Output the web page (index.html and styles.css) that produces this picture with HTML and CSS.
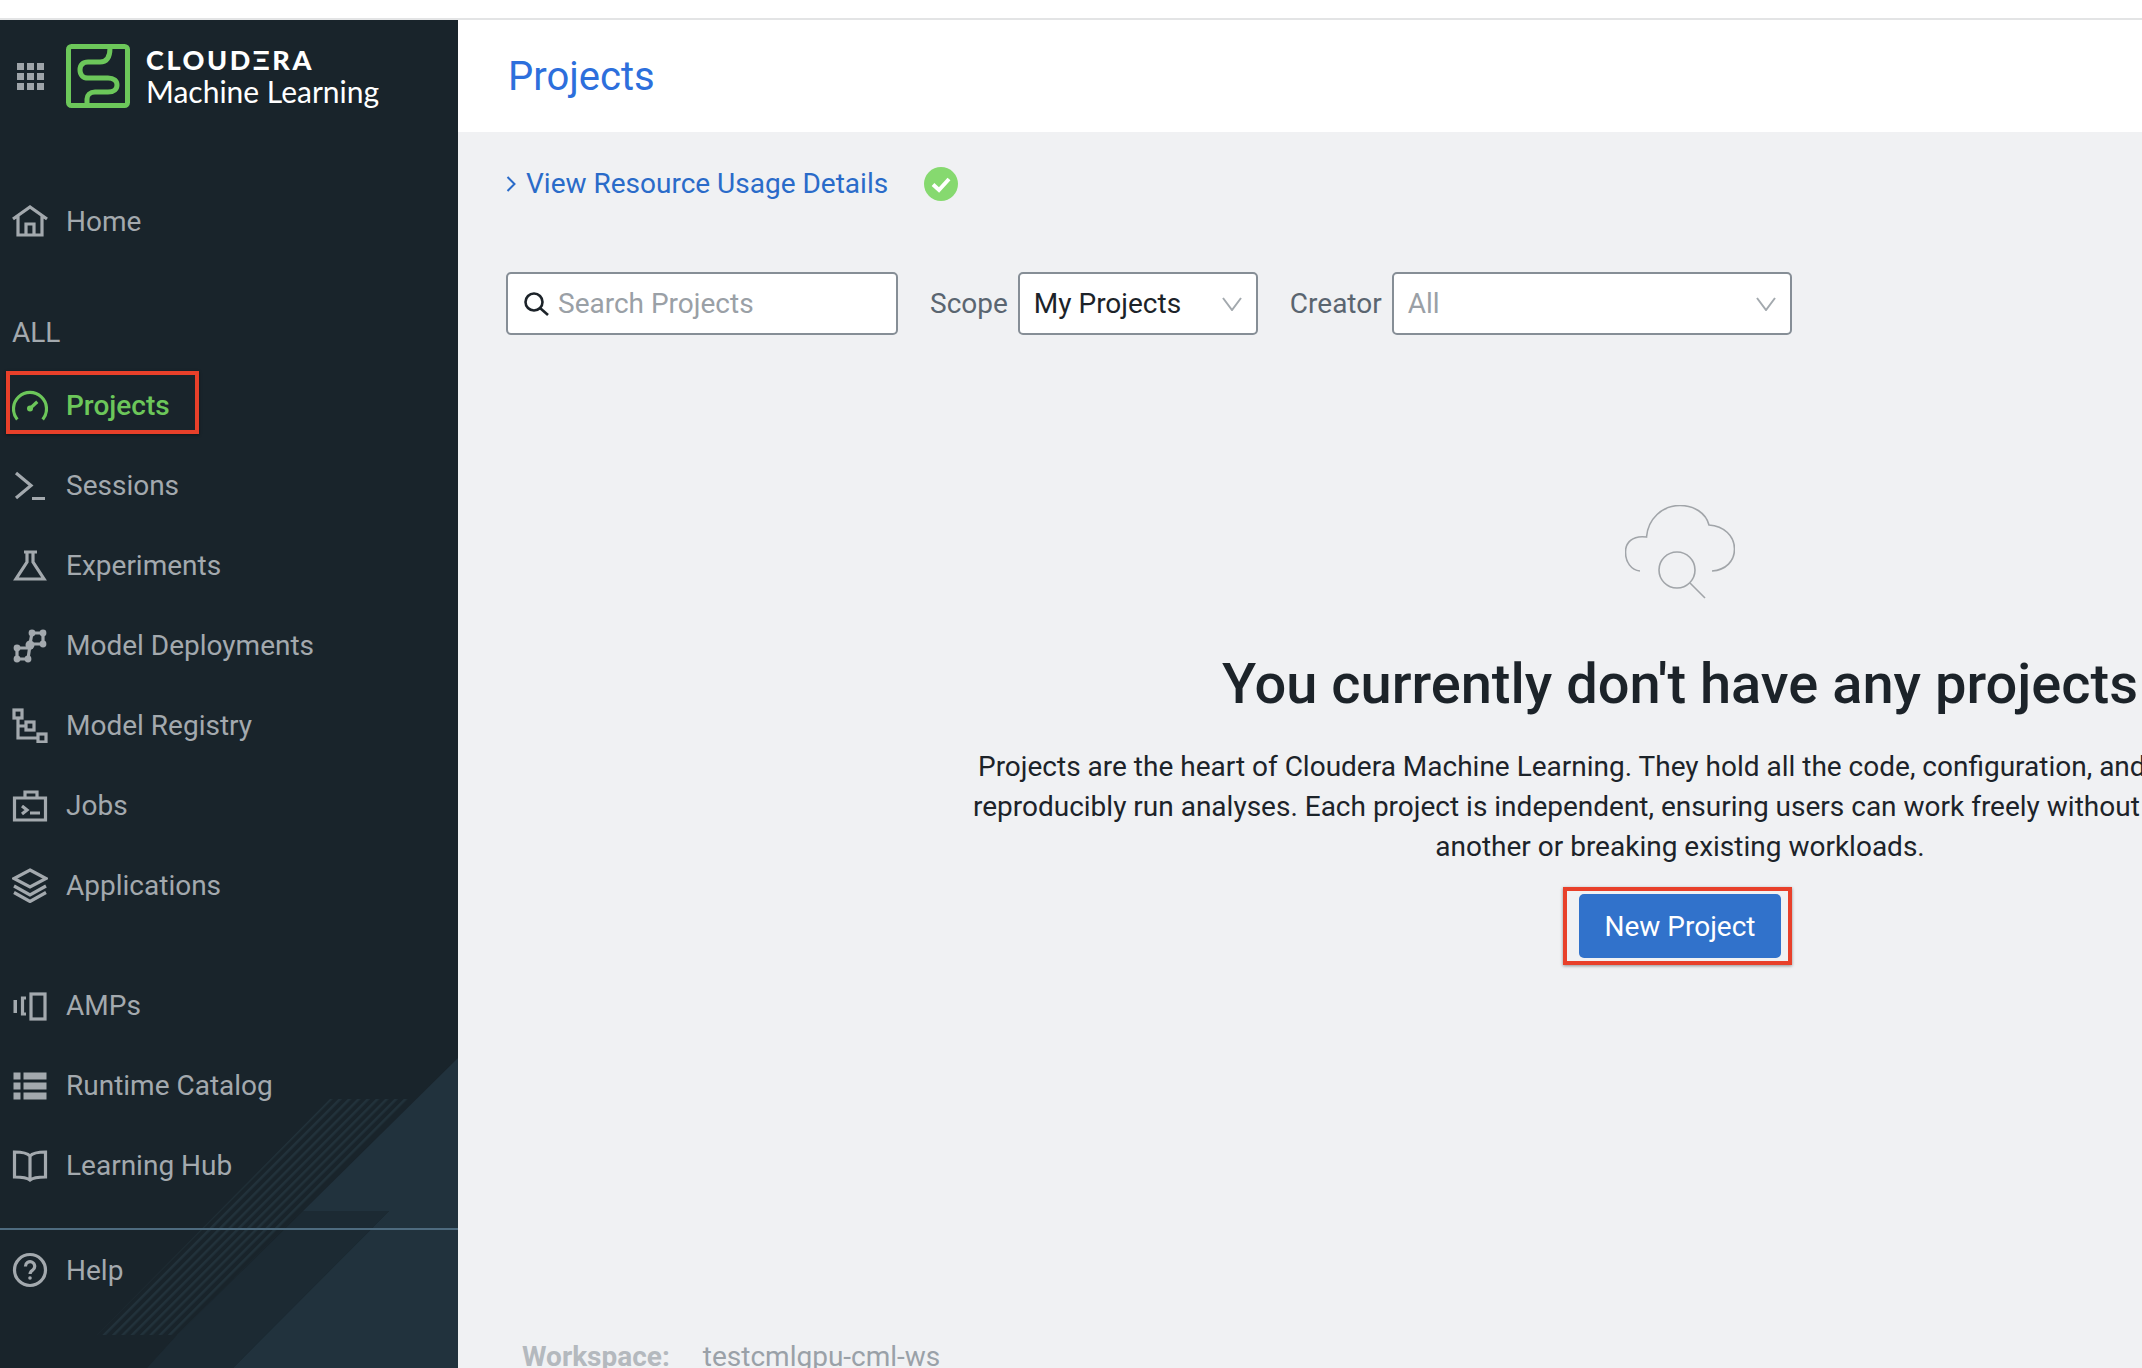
FILE: index.html
```html
<!DOCTYPE html>
<html lang="en">
<head>
    <meta charset="UTF-8">
    <meta name="viewport" content="width=device-width, initial-scale=1.0">
    <title>Projects - Cloudera Machine Learning</title>
    <link rel="stylesheet" href="styles.css">
</head>
<body>
    <div class="topline"></div>
    <div class="app">
        <aside class="sidebar">
            <svg class="sidebarArt" viewBox="0 20 458 1348" width="458" height="1348">
                <defs>
                    <pattern id="stripes" patternUnits="userSpaceOnUse" width="6.6" height="10" patternTransform="rotate(45)">
                        <rect width="2.4" height="10" fill="#22323b"></rect>
                    </pattern>
                </defs>
                <polygon points="458,1058 303,1211 389,1211 233,1368 458,1368" fill="#21323d"></polygon>
                <polygon points="389,1211 303,1211 177,1335 147,1368 233,1368" fill="#1c2a33"></polygon>
                <polygon points="330,1099 412,1099 177,1335 97,1335" fill="url(#stripes)"></polygon>
            </svg>

            <div class="brand">
                <svg class="gridIcon" viewBox="0 0 27 27" width="27" height="27">
                    <g fill="#9ea4a9">
                        <rect x="0" y="0" width="7" height="7"></rect><rect x="10" y="0" width="7" height="7"></rect><rect x="20" y="0" width="7" height="7"></rect>
                        <rect x="0" y="10" width="7" height="7"></rect><rect x="10" y="10" width="7" height="7"></rect><rect x="20" y="10" width="7" height="7"></rect>
                        <rect x="0" y="20" width="7" height="7"></rect><rect x="10" y="20" width="7" height="7"></rect><rect x="20" y="20" width="7" height="7"></rect>
                    </g>
                </svg>
                <svg class="logoIcon" viewBox="0 0 64 64" width="64" height="64">
                    <rect x="2.500" y="2.500" width="59" height="59" rx="3" fill="none" stroke="#6cc75a" stroke-width="5"></rect>
                    <path d="M44 4C44 12 42 18 34 18H22C17 18 14 21 14 26C14 31 17 34 22 34H42C48 34 51 37 51 41C51 45 48 48 42 48H29C24 48 21 51 21 55V62" fill="none" stroke="#6cc75a" stroke-width="5"></path>
                </svg>
                <div class="brandText">
                    <div class="brandName">CLOUDΞRA</div>
                    <div class="brandProduct">Machine Learning</div>
                </div>
            </div>

            <nav class="nav">
                <a class="navItem navHome">
                    <svg class="navIcon" viewBox="0 0 36 36"><path d="M1 16L18 4L35 16M6 13V32H30V13M14 32V21H22V32"></path></svg>
                    Home
                </a>
                <div class="navLabel">ALL</div>
                <a class="navItem navActive">
                    <svg class="navIcon" viewBox="0 0 36 36"><path d="M5.300 32.500A16.500 16.500 0 1 1 30.700 32.500"></path><path d="M18 21.500L25.300 14.800"></path><circle class="solid" cx="18" cy="21.500" r="3"></circle></svg>
                    Projects
                </a>
                <a class="navItem">
                    <svg class="navIcon" viewBox="0 0 36 36"><path d="M4 6L19 18.500L4 31M20 31.500H33"></path></svg>
                    Sessions
                </a>
                <a class="navItem">
                    <svg class="navIcon" viewBox="0 0 36 36"><path d="M12 5H25M15 5V15L4 32H32L21 15V5"></path></svg>
                    Experiments
                </a>
                <a class="navItem">
                    <svg class="navIcon" viewBox="0 0 36 36">
                        <path d="M20 6H31V17H18ZM5 21H18V18L16 32H5Z"></path>
                        <circle class="solid" cx="20" cy="6" r="3.400"></circle><circle class="solid" cx="31" cy="6" r="3.400"></circle><circle class="solid" cx="31" cy="17" r="3.400"></circle>
                        <circle class="solid" cx="18" cy="18" r="4.500"></circle>
                        <circle class="solid" cx="5" cy="21" r="3.400"></circle><circle class="solid" cx="5" cy="32" r="3.400"></circle><circle class="solid" cx="16" cy="32" r="3.400"></circle>
                    </svg>
                    Model Deployments
                </a>
                <a class="navItem">
                    <svg class="navIcon" viewBox="0 0 36 36">
                        <rect x="2" y="3" width="8" height="8"></rect><rect x="14" y="15" width="8" height="8"></rect><rect x="26" y="27" width="8" height="8"></rect>
                        <path d="M6 11V31H26M6 19H14"></path>
                    </svg>
                    Model Registry
                </a>
                <a class="navItem">
                    <svg class="navIcon" viewBox="0 0 36 36"><path d="M2.500 11H33.500V33H2.500ZM13 11V5H25V11M10 19L15 23L10 27M18 26H28"></path></svg>
                    Jobs
                </a>
                <a class="navItem">
                    <svg class="navIcon" viewBox="0 0 36 36"><path d="M18 3L34 11.500L18 20L2 11.500ZM2 19L18 28L34 19M2 25.500L18 34.500L34 25.500"></path></svg>
                    Applications
                </a>
                <a class="navItem navGroup">
                    <svg class="navIcon" viewBox="0 0 36 36">
                        <rect x="19" y="7" width="14" height="25"></rect>
                        <path d="M14 11H10.500V27H14"></path>
                        <rect class="solid" x="1.500" y="13" width="3.500" height="13"></rect>
                    </svg>
                    AMPs
                </a>
                <a class="navItem">
                    <svg class="navIcon" viewBox="0 0 36 36">
                        <g class="solid">
                            <rect x="1.500" y="5.500" width="7" height="7"></rect><rect x="11.500" y="5.500" width="23" height="7"></rect>
                            <rect x="1.500" y="15.500" width="7" height="7"></rect><rect x="11.500" y="15.500" width="23" height="7"></rect>
                            <rect x="1.500" y="25.500" width="7" height="7"></rect><rect x="11.500" y="25.500" width="23" height="7"></rect>
                        </g>
                    </svg>
                    Runtime Catalog
                </a>
                <a class="navItem">
                    <svg class="navIcon" viewBox="0 0 36 36"><path d="M18 9C15 5.500 9 5 2.500 5V30C9 30 15 30.500 18 33C21 30.500 27 30 33.500 30V5C27 5 21 5.500 18 9ZM18 9V33"></path></svg>
                    Learning Hub
                </a>
            </nav>

            <div class="helpArea">
                <a class="navItem navHelp">
                    <svg class="navIcon" viewBox="0 0 36 36"><circle cx="18" cy="18" r="15.500"></circle><path d="M13.500 14.500A4.600 4.600 0 1 1 20.800 18C19 19.300 18 20 18 22"></path><circle class="solid" cx="18" cy="26" r="1.800"></circle></svg>
                    Help
                </a>
            </div>
        </aside>

        <main class="main">
            <header class="pageHeader">
                <h1 class="pageTitle">Projects</h1>
            </header>

            <div class="resourceRow">
                <svg class="linkChevron" viewBox="0 0 10 20" width="10" height="20"><path d="M1.500 3L8.500 10L1.500 17"></path></svg>
                <a class="resourceLink">View Resource Usage Details</a>
                <svg class="statusIcon" viewBox="0 0 34 34" width="34" height="34">
                    <circle cx="17" cy="17" r="17" fill="#86d96f"></circle>
                    <path d="M9 17.500L15 23L25 12" fill="none" stroke="#fff" stroke-width="4"></path>
                </svg>
            </div>

            <div class="filters">
                <div class="field searchField">
                    <svg class="searchIcon" viewBox="0 0 26 24" width="26" height="24">
                        <circle cx="11" cy="10" r="8.500"></circle><path d="M17 16L25 23"></path>
                    </svg>
                    <span class="placeholder">Search Projects</span>
                </div>
                <span class="filterLabel">Scope</span>
                <div class="field selectField scopeField">
                    <span>My Projects</span>
                    <svg class="selectChevron" viewBox="0 0 20 14" width="20" height="14"><path d="M1 1L10 13L19 1"></path></svg>
                </div>
                <span class="filterLabel">Creator</span>
                <div class="field selectField creatorField">
                    <span class="placeholder">All</span>
                    <svg class="selectChevron" viewBox="0 0 20 14" width="20" height="14"><path d="M1 1L10 13L19 1"></path></svg>
                </div>
            </div>

            <section class="empty">
                <svg class="cloudIcon" viewBox="0 0 110 94" width="110" height="94">
                    <path d="M15 66C6 65 0.500 57 0.500 47C0.500 38 7 30 21.500 32C23 14 37 0.500 55 0.500C69 0.500 81 8 84 20C99 21 109.500 31 109.500 44C109.500 56 101 65 87 66"></path>
                    <circle cx="52" cy="65" r="18"></circle>
                    <path d="M65 78L80 93"></path>
                </svg>
                <h2 class="emptyTitle">You currently don't have any projects</h2>
                <p class="emptyText">Projects are the heart of Cloudera Machine Learning. They hold all the code, configuration, and libraries needed to<br>reproducibly run analyses. Each project is independent, ensuring users can work freely without interfering with one<br>another or breaking existing workloads.</p>
                <div class="callout">
                    <button class="primaryButton">New Project</button>
                </div>
            </section>

            <footer class="workspace">
                <span class="workspaceLabel">Workspace:</span>
                <span class="workspaceValue">testcmlgpu-cml-ws</span>
            </footer>
        </main>
    </div>
</body>
</html>
```

FILE: styles.css
```css
html, body {
    height: 100%;
}
body {
    margin: 0px;
    height: 1368px;
    overflow: hidden;
    background-color: #ffffff;
    font-family: Roboto, "Liberation Sans", sans-serif;
    font-size: 28px;
    color: #1c2329;
}
svg {
    display: block;
    flex: none;
}
.topline {
    height: 18px;
    border-bottom: 2px solid #e3e4e5;
}
.app {
    display: flex;
    height: 1348px;
}

/* sidebar */
.sidebar {
    position: relative;
    width: 458px;
    flex: none;
    background-color: #19242b;
    overflow: hidden;
}
.sidebarArt {
    position: absolute;
    top: 0;
    left: 0;
}
.brand {
    position: relative;
    display: flex;
    align-items: center;
    height: 112px;
    padding-left: 17px;
    box-sizing: border-box;
}
.gridIcon {
    margin-right: 22px;
}
.logoIcon {
    margin-right: 16px;
}
.brandName {
    font-family: Lato, sans-serif;
    font-weight: 900;
    font-size: 27px;
    line-height: 30px;
    letter-spacing: 2.6px;
    color: #ffffff;
}
.brandProduct {
    font-family: Lato, sans-serif;
    font-size: 30px;
    line-height: 33px;
    color: #ffffff;
}
.nav {
    position: relative;
    padding-top: 49px;
}
.navItem {
    position: relative;
    display: flex;
    align-items: center;
    gap: 18px;
    height: 80px;
    padding-left: 12px;
    color: #a3a9ae;
}
.navIcon {
    width: 36px;
    height: 36px;
    fill: none;
    stroke: currentColor;
    stroke-width: 3.2;
}
.navIcon .solid {
    fill: currentColor;
    stroke: none;
}
.navHome {
    margin-bottom: 52px;
}
.navLabel {
    height: 40px;
    line-height: 40px;
    padding-left: 12px;
    margin-bottom: 12px;
    color: #a3a9ae;
}
.navActive {
    color: #6cc75a;
    font-weight: 500;
}
/* red annotation from the original screenshot */
.navActive::after {
    content: "";
    position: absolute;
    top: 6px;
    left: 6px;
    width: 193px;
    height: 63px;
    box-sizing: border-box;
    border: 4px solid #e8402a;
    box-shadow: 0 1px 3px rgba(0, 0, 0, 0.4);
}
.navGroup {
    margin-top: 40px;
}
.helpArea {
    position: relative;
    margin-top: 23px;
    border-top: 2px solid #4e6b7f;
}

/* main area */
.main {
    flex: 1;
    min-width: 0;
    background-color: #f0f1f3;
    overflow: hidden;
}
.pageHeader {
    height: 112px;
    background-color: #ffffff;
    display: flex;
    align-items: center;
    padding-left: 50px;
}
.pageTitle {
    margin: 0;
    font-size: 40px;
    font-weight: 400;
    color: #2d6fdc;
}
.resourceRow {
    display: flex;
    align-items: center;
    height: 34px;
    margin-top: 35px;
    padding-left: 48px;
}
.linkChevron {
    fill: none;
    stroke: #2a6bc9;
    stroke-width: 2;
    margin-right: 10px;
}
.resourceLink {
    color: #2a6bc9;
    margin-right: 36px;
    position: relative;
    top: -1px;
}
.filters {
    display: flex;
    align-items: center;
    height: 63px;
    margin-top: 71px;
    padding-left: 48px;
}
.field {
    display: flex;
    align-items: center;
    height: 63px;
    box-sizing: border-box;
    background-color: #ffffff;
    border: 2px solid #868e96;
    border-radius: 5px;
}
.searchField {
    width: 392px;
    padding-left: 15px;
    margin-right: 32px;
}
.searchIcon {
    fill: none;
    stroke: #1c2329;
    stroke-width: 2.600;
    margin-right: 9px;
}
.placeholder {
    color: #9aa0a6;
}
.filterLabel {
    color: #5a6570;
    margin-right: 10px;
}
.selectField {
    justify-content: space-between;
    padding: 0 14px;
}
.scopeField {
    width: 240px;
    margin-right: 32px;
}
.creatorField {
    width: 400px;
}
.selectChevron {
    fill: none;
    stroke: #a3a9ae;
    stroke-width: 2;
}

/* empty state, wider than the visible window */
.empty {
    display: flex;
    flex-direction: column;
    align-items: center;
    width: 2444px;
    margin-top: 170px;
    text-align: center;
}
.cloudIcon {
    fill: none;
    stroke: #a1a5a9;
    stroke-width: 1.600;
}
.emptyTitle {
    margin: 52px 0 0 0;
    font-size: 56px;
    line-height: 66px;
    font-weight: 500;
    color: #1c2329;
}
.emptyText {
    margin: 30px 0 0 0;
    line-height: 40px;
}
.callout {
    margin: 20px 0 0 -5px;
    padding: 3px 7px 3px 12px;
    border: 4px solid #e8402a;
    box-shadow: 0 1px 3px rgba(0, 0, 0, 0.4);
}
.primaryButton {
    display: block;
    width: 202px;
    height: 64px;
    padding: 0;
    border: none;
    border-radius: 5px;
    background-color: #3172cb;
    font-family: inherit;
    font-size: 28px;
    color: #ffffff;
}
.workspace {
    margin-top: 375px;
    padding-left: 64px;
    display: flex;
    font-size: 28px;
}
.workspaceLabel {
    font-weight: 700;
    color: #b4b9be;
    margin-right: 33px;
}
.workspaceValue {
    color: #9aa1a8;
}
```
